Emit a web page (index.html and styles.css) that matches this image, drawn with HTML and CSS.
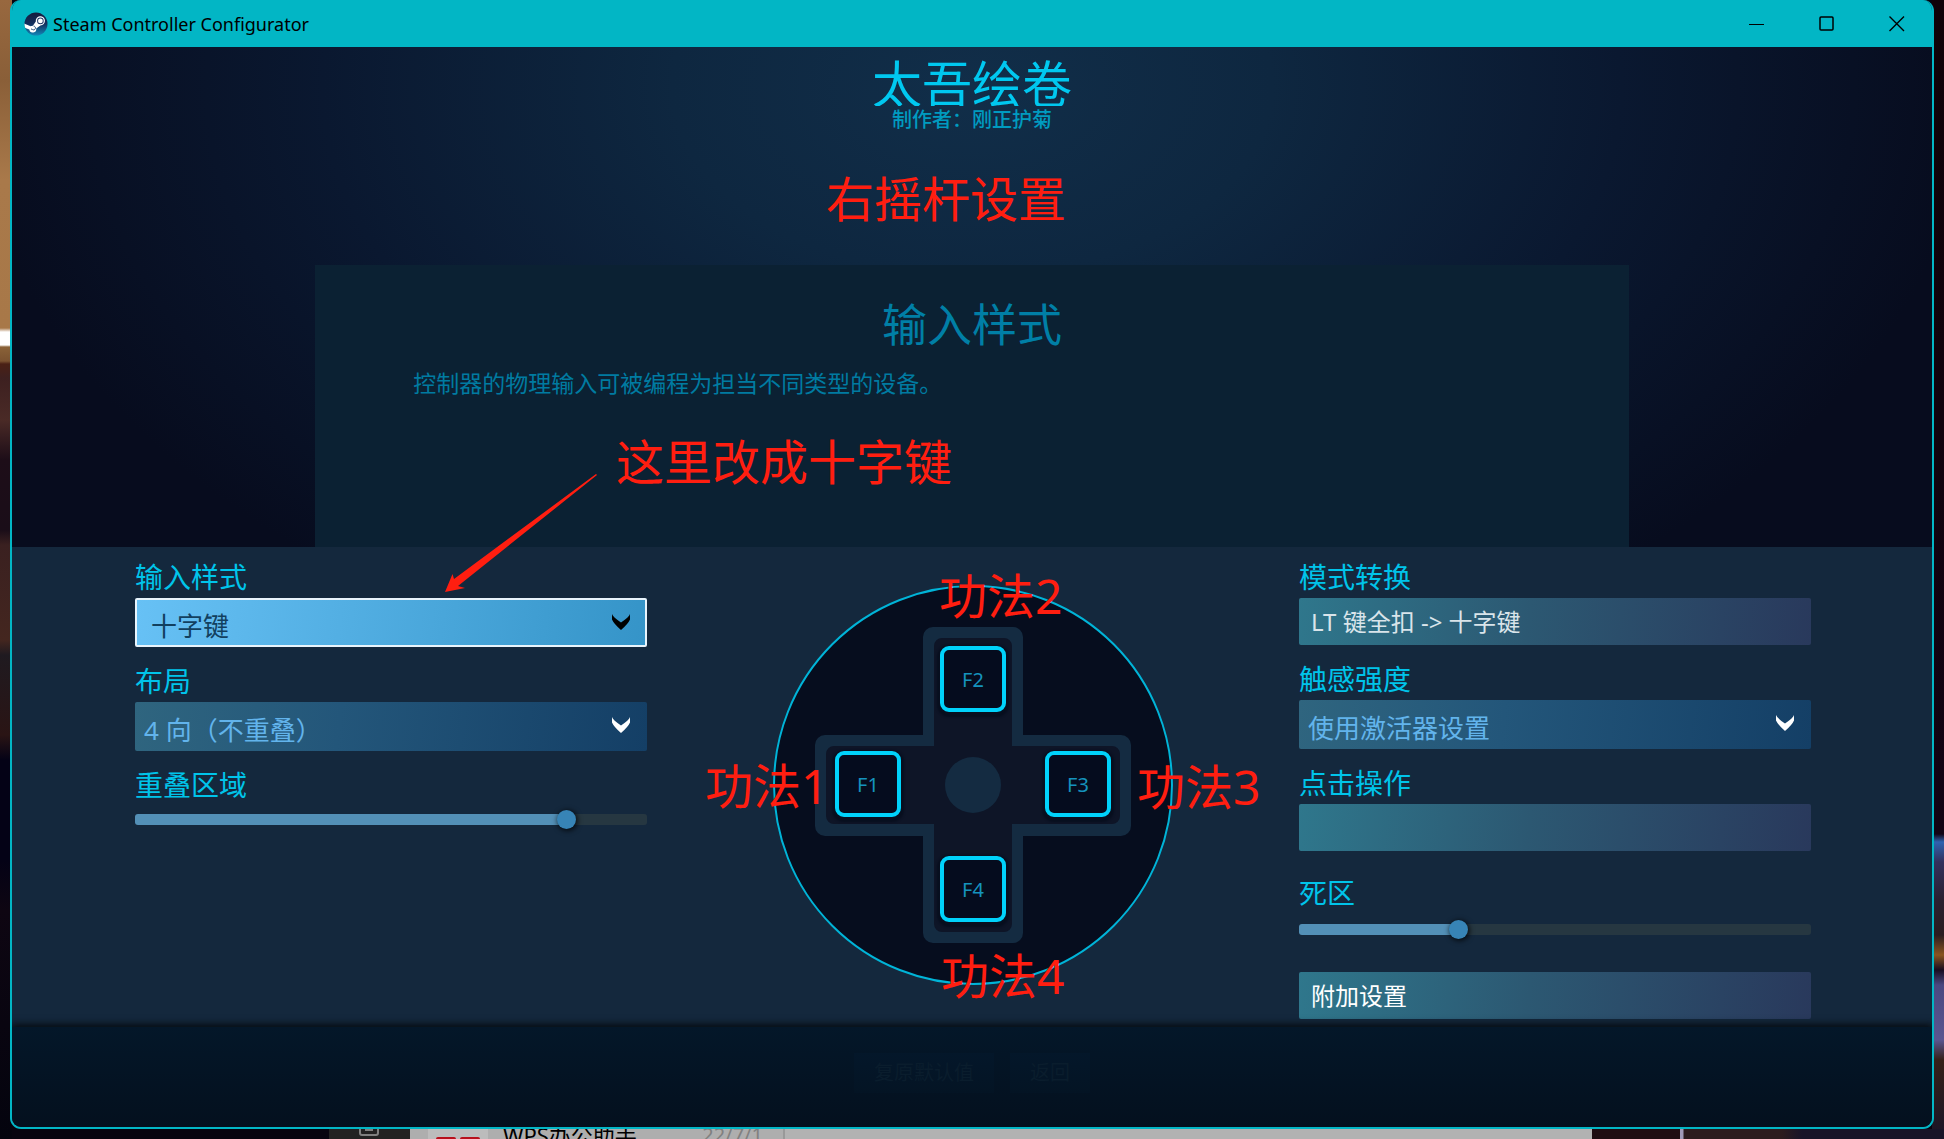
FILE: index.html
```html
<!DOCTYPE html>
<html lang="zh-CN">
<head>
<meta charset="utf-8">
<meta name="viewport" content="width=device-width, initial-scale=1">
<title>Steam Controller Configurator</title>
<link rel="stylesheet" href="styles.css">
</head>
<body>
<div class="window">
  <header class="titlebar">
    <svg class="steam-logo" viewBox="0 0 24 24" aria-hidden="true">
      <defs>
        <linearGradient id="steam-fill" x1="0" y1="0" x2="0" y2="1">
          <stop offset="0" stop-color="#151a3c"/>
          <stop offset="0.5" stop-color="#12305f"/>
          <stop offset="1" stop-color="#1387b8"/>
        </linearGradient>
        <clipPath id="steam-clip"><circle cx="12" cy="12" r="11.5"/></clipPath>
      </defs>
      <circle cx="12" cy="12" r="11.5" fill="url(#steam-fill)"/>
      <g clip-path="url(#steam-clip)">
        <path d="M0 11.6 L6.6 14.3 Q7.6 13.6 8.9 13.7 L11.8 9.5 A4.6 4.6 0 1 1 16.4 13.4 L12.2 16.4 A3.5 3.5 0 0 1 5.3 17.6 L0 15.5 Z" fill="#fff"/>
        <circle cx="16.4" cy="8.9" r="3.3" fill="#1b3566"/>
        <circle cx="16.4" cy="8.9" r="2.4" fill="#fff"/>
        <path d="M7 16.9 l1.4 .6 a1.9 1.9 0 1 0 1.2 -3.4" fill="none" stroke="#17406f" stroke-width="0.9"/>
      </g>
    </svg>
    <h1 class="app-name">Steam Controller Configurator</h1>
    <div class="window-buttons">
      <button type="button" aria-label="最小化"><svg viewBox="0 0 16 16"><path d="M0 8.5h15"/></svg></button>
      <button type="button" aria-label="最大化"><svg viewBox="0 0 16 16"><rect x="1" y="1" width="13" height="13" rx="1" stroke-width="1.5"/></svg></button>
      <button type="button" aria-label="关闭"><svg viewBox="0 0 16 16"><path d="M.5 .5l14.500 14.500M15 .5L.5 15" stroke-width="1.400"/></svg></button>
    </div>
  </header>

  <section class="intro">
    <h2 class="game-title">太吾绘卷</h2>
    <p class="author">制作者：刚正护菊</p>
    <p class="note note-stick">右摇杆设置</p>
    <div class="intro-panel">
      <h3>输入样式</h3>
      <p>控制器的物理输入可被编程为担当不同类型的设备。</p>
    </div>
  </section>

  <main class="config">
    <div class="column">
      <div class="field">
        <label for="input-style">输入样式</label>
        <div class="select-box select-active">
          <select id="input-style"><option>十字键</option></select>
          <svg class="chevron" viewBox="0 0 18 16" aria-hidden="true"><path d="M0 0Q1 3 9 8.500Q17 3 18 0L18 5.500Q16 10 9 16Q2 10 0 5.500Z"/></svg>
        </div>
        <div class="note note-mode">这里改成十字键
          <svg class="arrow" viewBox="0 0 152 118" aria-hidden="true"><path d="M151 0 L9 105 L7.500 100 L0 118 L20 114 L13 112 L152 1Z"/></svg>
        </div>
      </div>
      <div class="field">
        <label for="layout">布局</label>
        <div class="select-box">
          <select id="layout"><option>4 向（不重叠）</option></select>
          <svg class="chevron" viewBox="0 0 18 16" aria-hidden="true"><path d="M0 0Q1 3 9 8.500Q17 3 18 0L18 5.500Q16 10 9 16Q2 10 0 5.500Z"/></svg>
        </div>
      </div>
      <div class="field">
        <label for="overlap">重叠区域</label>
        <input id="overlap" type="range" min="0" max="200" value="171" style="--fill: 84%">
      </div>
    </div>

    <div class="pad">
      <svg class="pad-shape" viewBox="0 0 400 400" aria-hidden="true">
        <circle cx="200" cy="200" r="199" fill="#060d1e" stroke="#00b4d8" stroke-width="2"/>
        <path d="M160 42H240a10 10 0 0 1 10 10V150H348a10 10 0 0 1 10 10V241a10 10 0 0 1 -10 10H250V348a10 10 0 0 1 -10 10H160a10 10 0 0 1 -10 -10V251H52a10 10 0 0 1 -10 -10V160a10 10 0 0 1 10 -10H150V52a10 10 0 0 1 10 -10Z" fill="#142b41"/>
        <path d="M169 53H231a8 8 0 0 1 8 8V161H339a8 8 0 0 1 8 8V231a8 8 0 0 1 -8 8H239V339a8 8 0 0 1 -8 8H169a8 8 0 0 1 -8 -8V239H61a8 8 0 0 1 -8 -8V169a8 8 0 0 1 8 -8H161V61a8 8 0 0 1 8 -8Z" fill="#0e1527"/>
        <circle cx="200" cy="200" r="28" fill="#142b41"/>
      </svg>
      <button type="button" class="key key-up">F2</button>
      <button type="button" class="key key-left">F1</button>
      <button type="button" class="key key-right">F3</button>
      <button type="button" class="key key-down">F4</button>
      <span class="note note-up">功法2</span>
      <span class="note note-left">功法1</span>
      <span class="note note-right">功法3</span>
      <span class="note note-down">功法4</span>
    </div>

    <div class="column">
      <div class="field">
        <label for="mode-shift">模式转换</label>
        <button type="button" id="mode-shift" class="action">LT 键全扣 -&gt; 十字键</button>
      </div>
      <div class="field">
        <label for="haptics">触感强度</label>
        <div class="select-box">
          <select id="haptics"><option>使用激活器设置</option></select>
          <svg class="chevron" viewBox="0 0 18 16" aria-hidden="true"><path d="M0 0Q1 3 9 8.500Q17 3 18 0L18 5.500Q16 10 9 16Q2 10 0 5.500Z"/></svg>
        </div>
      </div>
      <div class="field">
        <label for="click-action">点击操作</label>
        <button type="button" id="click-action" class="action"></button>
      </div>
      <div class="field field-deadzone">
        <label for="deadzone">死区</label>
        <input id="deadzone" type="range" min="0" max="200" value="61" style="--fill: 31%">
      </div>
      <button type="button" class="action action-strong">附加设置</button>
    </div>
  </main>

  <footer class="footer">
    <button type="button">复原默认值</button>
    <button type="button">返回</button>
  </footer>
</div>

<div class="backdrop">
  <div class="backdrop-nav"><svg viewBox="0 0 20 20" aria-hidden="true"><path d="M1 -8V4a2 2 0 0 0 2 2H17a2 2 0 0 0 2 -2V-8M6 1H14"/></svg></div>
  <div class="backdrop-chat">
    <div class="avatar"><i></i><i></i></div>
    <span class="chat-name">WPS办公助手</span>
    <span class="chat-date">22/7/1</span>
  </div>
  <div class="backdrop-body"></div>
  <div class="backdrop-game"></div>
</div>
</body>
</html>
```
FILE: styles.css
```css
* {
  box-sizing: border-box;
  margin: 0;
  padding: 0;
}

body {
  min-height: 100vh;
  display: flex;
  flex-direction: column;
  font-family: "Noto Sans", "Noto Sans CJK SC", sans-serif;
  background:
    linear-gradient(180deg, #98683f 0, #8a5f38 80px, #a9794a 180px, #a87848 328px, #fff 332px, #fff 345px, #8a6238 347px, #7a5230 361px, #4a2015 364px, #3d2020 378px, #4a2a26 420px, #1d0d18 460px, #1a0d18 530px, #3a2020 545px, #44261f 640px, #1f1a20 655px, #2a1414 735px, #040216 760px, #040216 860px, #0e0612 910px, #04040e 1139px) 0 0 / 12px 1139px no-repeat,
    linear-gradient(180deg, #100208 0, #120414 834px, #2f63b0 842px, #33305c 862px, #2a2030 900px, #2a1c20 935px, #8a5520 955px, #180c20 970px, #4a4880 985px, #5a5690 1040px, #352018 1060px, #1a1428 1139px) 100% 0 / 12px 1139px no-repeat,
    #07040f;
}

button,
select,
input {
  font: inherit;
  border: 0;
  color: inherit;
}

.window {
  flex: 1;
  margin: 0 10px;
  display: flex;
  flex-direction: column;
  border: 2px solid #02b6c5;
  border-top: 0;
  border-radius: 11px;
  overflow: hidden;
  background: #14283d;
}

/* Title bar */
.titlebar {
  height: 47px;
  display: flex;
  align-items: center;
  padding-left: 12px;
  background: #02b6c5;
  color: #000;
}

.steam-logo {
  width: 24px;
  height: 24px;
}

.app-name {
  margin-left: 5px;
  font-size: 18px;
  font-weight: 400;
  line-height: 28px;
}

.window-buttons {
  margin-left: auto;
  display: flex;
}

.window-buttons button {
  width: 70px;
  height: 47px;
  display: grid;
  place-items: center;
  background: none;
}

.window-buttons svg {
  width: 16px;
  height: 16px;
  fill: none;
  stroke: #000;
}

/* Heading area */
.intro {
  position: relative;
  display: flex;
  flex-direction: column;
  align-items: center;
  padding-top: 9px;
  background: radial-gradient(ellipse 52% 125% at 50% 8%, #112e49 0%, #0e2740 30%, #0a1830 65%, #070c1e 100%);
}

.game-title {
  height: 50px;
  overflow: hidden;
  font-size: 50px;
  font-weight: 400;
  line-height: 56px;
  color: #00c8f0;
}

.author {
  font-size: 20px;
  font-weight: 500;
  line-height: 28px;
  color: #009bc0;
}

.intro-panel {
  width: 68.4%;
  height: 282px;
  margin-top: 131px;
  padding: 30px 98px;
  background: #0b2133;
  color: #007fa6;
}

.intro-panel h3 {
  font-size: 45px;
  font-weight: 400;
  line-height: 60px;
  text-align: center;
}

.intro-panel p {
  margin-top: 12px;
  font-size: 23px;
  line-height: 32px;
  color: #007ba1;
}

/* Hand-written notes over the interface */
.note {
  position: absolute;
  z-index: 2;
  font-size: 48px;
  line-height: 60px;
  color: #ff1e10;
  white-space: nowrap;
  pointer-events: none;
}

.note-stick {
  top: 122px;
  left: calc(50% - 146px);
}

.note-mode {
  top: -126px;
  left: 481px;
}

.arrow {
  position: absolute;
  top: 42px;
  left: -171px;
  width: 152px;
  height: 118px;
  fill: #ff1e10;
}

/* Settings */
.config {
  display: grid;
  grid-template-columns: 512fr 652fr 512fr;
  padding: 11px 121px 8px 123px;
}

.column {
  display: flex;
  flex-direction: column;
  gap: 15px;
}

.field {
  position: relative;
  display: flex;
  flex-direction: column;
}

.field label {
  margin-bottom: 2px;
  font-size: 28px;
  line-height: 38px;
  color: #00c4ea;
}

.field-deadzone {
  margin-top: 8px;
}

.select-box {
  position: relative;
  height: 49px;
  border-radius: 2px;
  background: linear-gradient(97deg, #2f657f, #23567a 40%, #143f66);
  color: #62b4ec;
  fill: #fff;
}

.select-box select {
  width: 100%;
  height: 100%;
  padding: 6px 50px 0 9px;
  appearance: none;
  background: none;
  font-size: 26px;
}

.select-box option {
  color: #000;
}

.select-active {
  border: 2px solid #e8f4fc;
  background: linear-gradient(97deg, #67c1f5, #3594c8);
  color: #12405f;
  fill: #000;
}

.select-active select {
  padding-left: 14px;
}

.chevron {
  position: absolute;
  top: 15px;
  right: 17px;
  width: 18px;
  height: 16px;
  pointer-events: none;
}

.select-active .chevron {
  top: 14px;
  right: 15px;
}

.action {
  height: 47px;
  padding: 0 12px;
  border-radius: 2px;
  background: linear-gradient(97deg, #2f778c, #2c5872 45%, #29395c);
  color: #d9e4ea;
  font-size: 24px;
  line-height: 32px;
  text-align: left;
}

.action-strong {
  margin-top: 22px;
  color: #fff;
}

input[type="range"] {
  width: 100%;
  height: 11px;
  margin-top: 8px;
  appearance: none;
  border-radius: 3px;
  background: linear-gradient(90deg, #5390b7 var(--fill), #263741 var(--fill));
}

.field-deadzone input[type="range"] {
  margin-top: 10px;
}

input[type="range"]::-webkit-slider-thumb {
  appearance: none;
  width: 19px;
  height: 19px;
  border-radius: 50%;
  background: #3784b6;
  box-shadow: 1px 1px 5px 1px rgba(0, 0, 0, 0.7);
}

/* Directional pad */
.pad {
  position: relative;
  justify-self: center;
  width: 400px;
  height: 400px;
  margin-top: 27px;
}

.pad-shape {
  display: block;
  width: 100%;
  height: 100%;
}

.key {
  position: absolute;
  width: 66px;
  height: 66px;
  border: 4px solid #00d2fb;
  border-radius: 9px;
  background: #050c1e;
  box-shadow: 0 2px 2px 3px #080f1f;
  color: #1593bd;
  font-size: 20px;
}

.key-up {
  top: 61px;
  left: 167px;
}

.key-left {
  top: 166px;
  left: 62px;
}

.key-right {
  top: 166px;
  left: 272px;
}

.key-down {
  top: 271px;
  left: 167px;
}

.note-up {
  top: -19px;
  left: 166px;
}

.note-left {
  top: 171px;
  left: -68px;
}

.note-right {
  top: 172px;
  left: 364px;
}

.note-down {
  top: 361px;
  left: 168px;
}

/* Bottom bar */
.footer {
  position: relative;
  flex: 1;
  min-height: 98px;
  display: flex;
  align-items: flex-start;
  justify-content: center;
  gap: 16px;
  padding-top: 26px;
  background: linear-gradient(180deg, #041729, #04101e);
  box-shadow: 0 -2px 7px 1px #060c12;
}

.footer button {
  padding: 6px 20px;
  background: linear-gradient(180deg, #04172a, #041424);
  color: #0a1d2d;
  font-size: 20px;
  line-height: 28px;
}

/* Application visible beneath the window */
.backdrop {
  height: 10px;
  display: flex;
  overflow: hidden;
  padding-left: 329px;
}

.backdrop-nav {
  width: 81px;
  padding-left: 30px;
  background: #222;
}

.backdrop-nav svg {
  width: 20px;
  height: 20px;
  fill: none;
  stroke: #808080;
  stroke-width: 2;
}

.backdrop-chat {
  width: 375px;
  display: flex;
  align-items: flex-start;
  padding-left: 18px;
  background: #aeaeae;
  border-right: 2px solid #999;
}

.avatar {
  width: 60px;
  height: 10px;
  display: flex;
  gap: 4px;
  padding: 8px 8px 0;
  background: #bcbcbc;
}

.avatar i {
  flex: 1;
  border-radius: 4px 4px 0 0;
  background: #b8101c;
}

.chat-name,
.chat-date {
  margin-top: -8px;
  font-size: 22px;
  line-height: 28px;
  color: #000;
}

.chat-name {
  margin-left: 15px;
}

.chat-date {
  margin-left: auto;
  margin-right: 20px;
  font-size: 20px;
  color: #808080;
}

.backdrop-body {
  flex: 1;
  background: #b2b2b2;
}

.backdrop-game {
  width: 352px;
  background: linear-gradient(90deg, #1f0d12 88px, #a09ab8 88px, #a09ab8 91px, #2c1c1e 92px, #2c1c1e 190px, #181428 210px);
}
```
